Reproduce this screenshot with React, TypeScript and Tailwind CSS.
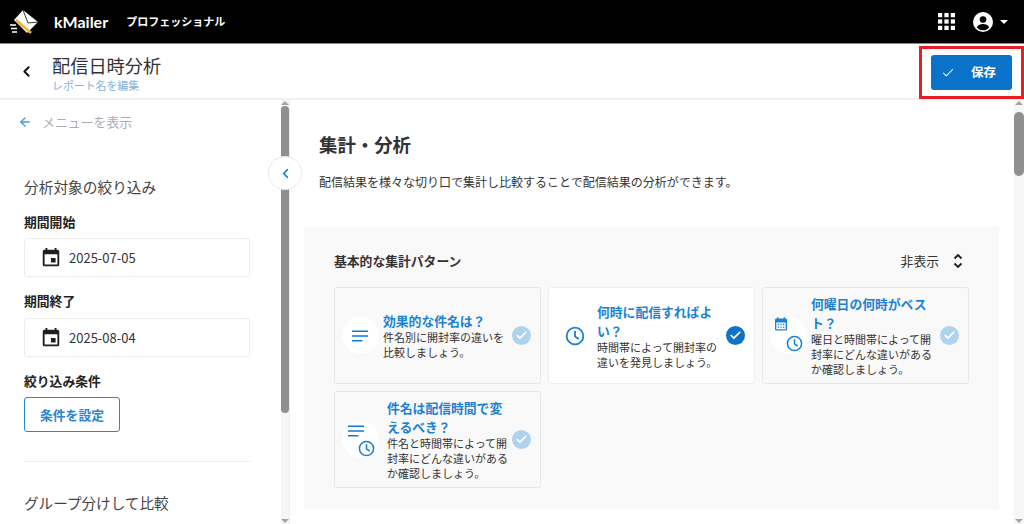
import { ArrowLeft, Check, ChevronLeft } from "lucide-react";
import type { ReactNode } from "react";

function ListIcon({ className = "" }: { className?: string }) {
  return (
    <svg viewBox="0 0 18 12" className={className}>
      <path d="M0 1h17M0 6h17M0 11h11" stroke="#0f7ad1" strokeWidth="1.7" fill="none" />
    </svg>
  );
}

function ClockIcon({ className = "" }: { className?: string }) {
  return (
    <svg viewBox="0 0 24 24" className={className} fill="none" stroke="#1a82d6" strokeWidth="2.2">
      <circle cx="12" cy="12" r="10" />
      <path d="M12 6v6.5l4.5 3" />
    </svg>
  );
}

function CalendarIcon({ className = "" }: { className?: string }) {
  return (
    <svg viewBox="0 0 24 24" className={className}>
      <path
        fill="#1a82d6"
        d="M19 3h-1V1h-2v2H8V1H6v2H5a2 2 0 0 0-2 2v14a2 2 0 0 0 2 2h14a2 2 0 0 0 2-2V5a2 2 0 0 0-2-2zm0 16H5V9h14v10zM7 11h2v2H7zm4 0h2v2h-2zm4 0h2v2h-2zm-8 4h2v2H7zm4 0h2v2h-2zm4 0h2v2h-2z"
      />
    </svg>
  );
}

function EventIcon() {
  return (
    <svg viewBox="0 0 24 24" className="w-[22px] h-[22px] shrink-0">
      <path
        fill="#1f1f1f"
        d="M17 12h-5v5h5v-5zM16 1v2H8V1H6v2H5a2 2 0 0 0-2 2v14a2 2 0 0 0 2 2h14a2 2 0 0 0 2-2V5a2 2 0 0 0-2-2h-1V1h-2zm3 18H5V8h14v11z"
      />
    </svg>
  );
}

function CheckBadge({ active }: { active?: boolean }) {
  return (
    <div
      className={`w-[19px] h-[19px] rounded-full shrink-0 flex items-center justify-center ${active ? "bg-[#0f72c4]" : "bg-[#aed3ee]"}`}
    >
      <Check size={13} strokeWidth={3.2} className="text-white" />
    </div>
  );
}

function Card(props: { icon: ReactNode; title: string; desc: string; active?: boolean; iconGap: string }) {
  return (
    <div
      className={`h-[97px] rounded-[3px] border flex items-center pl-[7px] pr-[9px] ${props.active ? "bg-white border-[#efefef]" : "bg-[#f9f9f9] border-[#e8e8e8]"}`}
    >
      <div className="relative w-[37px] h-[37px] rounded-full bg-white shrink-0 flex items-center justify-center">
        {props.icon}
      </div>
      <div className={`w-[124px] ${props.iconGap} shrink-0`}>
        <p className="text-[12.8px] leading-[19px] font-bold text-[#1a82d6]">{props.title}</p>
        <p className="text-[11px] leading-[15px] text-[#333]">{props.desc}</p>
      </div>
      <div className="ml-auto">
        <CheckBadge active={props.active} />
      </div>
    </div>
  );
}

function DateField({ value }: { value: string }) {
  return (
    <div className="mt-[7px] h-[39px] border border-[#ececec] rounded-[3px] flex items-center pl-[15px] gap-[7px]">
      <EventIcon />
      <span className="text-[13px] text-[#333]">{value}</span>
    </div>
  );
}

function Scrollbar({ thumb, top, width }: { thumb: string; top: string; width: string }) {
  return (
    <div className={`${width} h-full bg-[#f6f6f6] shrink-0 flex flex-col items-center relative`}>
      <div className="w-0 h-0 mt-[1px] border-x-[4px] border-x-transparent border-b-[4px] border-b-[#a3a3a3]" />
      <div className={`w-full ${top} ${thumb} rounded-full bg-[#8f8f8f]`} />
      <div className="mt-auto mb-[1px] w-0 h-0 border-x-[4px] border-x-transparent border-t-[4px] border-t-[#a3a3a3]" />
    </div>
  );
}

export default function App() {
  return (
    <div
      className="w-[1024px] h-[524px] overflow-hidden flex flex-col bg-white text-[#333]"
      style={{ fontFamily: '"Noto Sans CJK JP", Roboto, sans-serif' }}
    >
      <header className="h-[44px] bg-black border-b border-[#8a8a8a] flex items-center shrink-0 pl-[9px] pr-[16px]">
        <svg viewBox="0 0 30 25" className="w-[30px] h-[25px]">
          <path d="M14 1 29 13 18 24 5 11Z" fill="#fff" />
          <path d="M14 1 19 14 29 13" fill="none" stroke="#000" strokeWidth="0.8" />
          <path d="M7 11 22 24" stroke="#e8b63a" strokeWidth="2.6" />
          <path d="M1 16h6M2 19.5h6M3 23h5" stroke="#fff" strokeWidth="1.3" />
        </svg>
        <span className="ml-[15px] text-[16px] font-bold text-white" style={{ fontFamily: "Lato, sans-serif" }}>
          kMailer
        </span>
        <span className="ml-[18px] text-[11px] font-bold text-white">プロフェッショナル</span>
        <svg viewBox="0 0 16 16" className="ml-auto w-[17px] h-[17px]" fill="#fff">
          <rect x="0" y="0" width="4" height="4" />
          <rect x="6" y="0" width="4" height="4" />
          <rect x="12" y="0" width="4" height="4" />
          <rect x="0" y="6" width="4" height="4" />
          <rect x="6" y="6" width="4" height="4" />
          <rect x="12" y="6" width="4" height="4" />
          <rect x="0" y="12" width="4" height="4" />
          <rect x="6" y="12" width="4" height="4" />
          <rect x="12" y="12" width="4" height="4" />
        </svg>
        <svg viewBox="0 0 24 24" className="ml-[18px] w-[20px] h-[20px]">
          <circle cx="12" cy="12" r="12" fill="#fff" />
          <circle cx="12" cy="9" r="4" fill="#000" />
          <path d="M4.5 18.5C6 15.5 9 14.5 12 14.5s6 1 7.5 4A10 10 0 0 1 12 22a10 10 0 0 1-7.5-3.5Z" fill="#000" />
        </svg>
        <div className="ml-[7px] w-0 h-0 border-x-[4px] border-x-transparent border-t-[4px] border-t-white" />
      </header>

      <div className="h-[56px] shrink-0 flex items-center border-b-2 border-[#f1f1f1] pl-[18px]">
        <ChevronLeft size={17} strokeWidth={2.8} className="text-[#111]" />
        <div className="ml-[17px] self-start mt-[9px]">
          <p className="text-[18.2px] leading-[24px] text-[#333]">配信日時分析</p>
          <p className="mt-[1px] text-[10.9px] leading-[15px] text-[#7fb3dc]">レポート名を編集</p>
        </div>
        <div className="ml-auto self-start mt-[2px] w-[105px] h-[53px] border-[3px] border-[#ea1c24] flex items-center justify-center">
          <button className="w-[81px] h-[35px] rounded-[3px] bg-[#0a72c8] flex items-center pl-[10px] text-white">
            <Check size={14} strokeWidth={1.8} />
            <span className="ml-[16px] text-[12.5px] font-bold">保存</span>
          </button>
        </div>
      </div>

      <div className="flex-1 flex min-h-0 relative">
        <aside className="w-[290px] shrink-0 flex border-r border-[#eee]">
          <div className="w-[281px] pl-[24px] pr-[31px] shrink-0">
            <div className="flex items-center -ml-[6px] mt-[13px] h-[18px] gap-[10px]">
              <ArrowLeft size={14} strokeWidth={2.4} className="text-[#4a97d8]" />
              <span className="text-[12.9px] text-[#a9adb3]">メニューを表示</span>
            </div>
            <p className="mt-[46px] text-[14.7px] leading-[20px] text-[#444]">分析対象の絞り込み</p>
            <p className="mt-[16px] text-[12.8px] leading-[18px] font-bold text-[#222]">期間開始</p>
            <DateField value="2025-07-05" />
            <p className="mt-[14px] text-[12.8px] leading-[20px] font-bold text-[#222]">期間終了</p>
            <DateField value="2025-08-04" />
            <p className="mt-[15px] text-[12.8px] leading-[18px] font-bold text-[#222]">絞り込み条件</p>
            <button className="mt-[7px] block w-[96px] h-[35px] border border-[#2b86d4] rounded-[3px] text-[12.8px] font-bold text-[#2b86d4]">
              条件を設定
            </button>
            <div className="mt-[29px] h-[1px] bg-[#eeeeee]" />
            <p className="mt-[31px] text-[14.6px] leading-[20px] text-[#444]">グループ分けして比較</p>
          </div>
          <Scrollbar width="w-[8px]" thumb="h-[307px]" top="mt-[1px]" />
        </aside>

        <div className="absolute left-[268px] top-[56px] w-[34px] h-[34px] rounded-full bg-white border border-[#e8e8e8] flex items-center justify-center">
          <ChevronLeft size={15} strokeWidth={2.8} className="text-[#0f7ad1]" />
        </div>

        <main className="flex-1 min-w-0 overflow-hidden pl-[14px] pr-[15px]">
          <h2 className="mt-[31px] ml-[15px] text-[18.4px] leading-[26px] font-bold text-[#333]">集計・分析</h2>
          <p className="mt-[16px] ml-[15px] text-[12px] leading-[18px] text-[#333]">
            配信結果を様々な切り口で集計し比較することで配信結果の分析ができます。
          </p>
          <section className="mt-[36px] h-[283px] bg-[#f9f9f9] pl-[30px] pr-[30px]">
            <div className="h-[60px] pt-[8px] flex items-center">
              <p className="text-[12.8px] font-bold text-[#333]">基本的な集計パターン</p>
              <span className="ml-auto text-[12.8px] text-[#333]">非表示</span>
              <svg viewBox="0 0 10 16" className="ml-[14px] mr-[6px] w-[10px] h-[16px]">
                <path d="M1.5 5.5 5 2l3.5 3.5M1.5 10.5 5 14l3.5-3.5" fill="none" stroke="#222" strokeWidth="1.9" />
              </svg>
            </div>
            <div className="grid grid-cols-[207px_207px_207px] gap-[7px]">
              <Card
                icon={<ListIcon className="w-[17px] h-[12px]" />}
                title="効果的な件名は？"
                desc="件名別に開封率の違いを比較しましょう。"
                iconGap="ml-[4px]"
              />
              <Card
                active
                icon={<ClockIcon className="w-[20px] h-[20px]" />}
                title="何時に配信すればよい？"
                desc="時間帯によって開封率の違いを発見しましょう。"
                iconGap="ml-[4px]"
              />
              <Card
                icon={
                  <>
                    <CalendarIcon className="absolute left-[3px] top-[-1px] w-[16px] h-[17px]" />
                    <ClockIcon className="absolute left-[16px] top-[18px] w-[17px] h-[17px]" />
                  </>
                }
                title="何曜日の何時がベスト？"
                desc="曜日と時間帯によって開封率にどんな違いがあるか確認しましょう。"
                iconGap="ml-[4px]"
              />
              <Card
                icon={
                  <>
                    <ListIcon className="absolute left-[6px] top-[4px] w-[17px] h-[12px]" />
                    <ClockIcon className="absolute left-[16px] top-[19px] w-[17px] h-[17px]" />
                  </>
                }
                title="件名は配信時間で変えるべき？"
                desc="件名と時間帯によって開封率にどんな違いがあるか確認しましょう。"
                iconGap="ml-[8px]"
              />
            </div>
          </section>
        </main>

        <Scrollbar width="w-[10px]" thumb="h-[64px]" top="mt-[7px]" />
      </div>
    </div>
  );
}
